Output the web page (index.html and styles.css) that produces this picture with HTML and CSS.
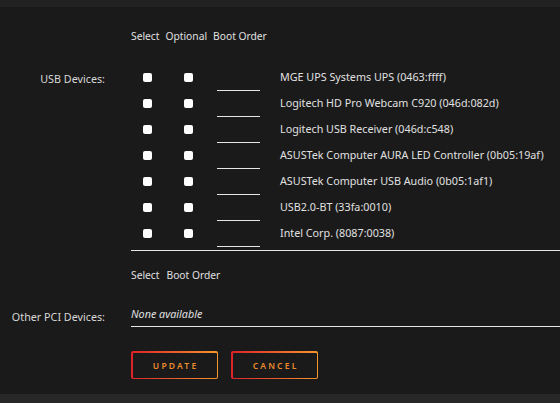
FILE: index.html
```html
<!DOCTYPE html>
<html>
<head>
<meta charset="utf-8">
<link rel="stylesheet" href="styles.css">
</head>
<body>
<div class="topbar"></div>
<main class="panel">
  <form class="form">
    <div class="field">
      <div class="label"></div>
      <div class="head">
        <span>Select</span>
        <span>Optional</span>
        <span>Boot Order</span>
      </div>
    </div>

    <div class="field usb">
      <div class="label first">USB Devices:</div>
      <div class="list">
        <div class="row"><span class="c-sel"><i class="cb"></i></span><span class="c-opt"><i class="cb"></i></span><span class="c-boot"><i class="order"></i></span><span class="name">MGE UPS Systems UPS (0463:ffff)</span></div>
        <div class="row"><span class="c-sel"><i class="cb"></i></span><span class="c-opt"><i class="cb"></i></span><span class="c-boot"><i class="order"></i></span><span class="name">Logitech HD Pro Webcam C920 (046d:082d)</span></div>
        <div class="row"><span class="c-sel"><i class="cb"></i></span><span class="c-opt"><i class="cb"></i></span><span class="c-boot"><i class="order"></i></span><span class="name">Logitech USB Receiver (046d:c548)</span></div>
        <div class="row"><span class="c-sel"><i class="cb"></i></span><span class="c-opt"><i class="cb"></i></span><span class="c-boot"><i class="order"></i></span><span class="name">ASUSTek Computer AURA LED Controller (0b05:19af)</span></div>
        <div class="row"><span class="c-sel"><i class="cb"></i></span><span class="c-opt"><i class="cb"></i></span><span class="c-boot"><i class="order"></i></span><span class="name">ASUSTek Computer USB Audio (0b05:1af1)</span></div>
        <div class="row"><span class="c-sel"><i class="cb"></i></span><span class="c-opt"><i class="cb"></i></span><span class="c-boot"><i class="order"></i></span><span class="name">USB2.0-BT (33fa:0010)</span></div>
        <div class="row"><span class="c-sel"><i class="cb"></i></span><span class="c-opt"><i class="cb"></i></span><span class="c-boot"><i class="order"></i></span><span class="name">Intel Corp. (8087:0038)</span></div>
      </div>
    </div>

    <div class="field">
      <div class="label"></div>
      <div class="head pci-head">
        <span>Select</span>
        <span>Boot Order</span>
      </div>
    </div>

    <div class="field pci">
      <div class="label">Other PCI Devices:</div>
      <div class="none">None available</div>
    </div>

    <div class="field actions">
      <div class="label"></div>
      <div class="buttons">
        <button type="button" class="btn"><span class="btn-face">UPDATE</span></button>
        <button type="button" class="btn"><span class="btn-face">CANCEL</span></button>
      </div>
    </div>
  </form>
</main>
<div class="bottombar"></div>
</body>
</html>
```

FILE: styles.css
```css
html, body {
  margin: 0;
  padding: 0;
  height: 100%;
  overflow: hidden;
}

body {
  background: #1a1a1a;
  color: #e0e0e0;
  font-family: "Noto Sans", "DejaVu Sans", sans-serif;
  font-size: 10.75px;
  display: flex;
  flex-direction: column;
}

.topbar {
  height: 7px;
  background: #222222;
  flex: none;
}

.bottombar {
  height: 9px;
  background: #282828;
  flex: none;
}

.panel {
  flex: 1;
}

.form {
  display: flex;
  flex-direction: column;
}

.field {
  display: grid;
  grid-template-columns: 105px 1fr;
  column-gap: 26px;
  align-items: start;
}

.label {
  text-align: right;
  color: #d8d8d8;
}

.head {
  display: flex;
  gap: 6px;
  font-size: 10.25px;
  margin-top: 22px;
  height: 36px;
  line-height: 14px;
}

.c-sel {
  width: 36px;
  flex: none;
}

.c-opt {
  width: 48px;
  flex: none;
}

.c-boot {
  width: 65px;
  flex: none;
}

.label.first {
  margin-top: 7px;
  line-height: 14px;
}

.list {
  display: flex;
  flex-direction: column;
  border-bottom: 1px solid #e6e6e6;
  padding-bottom: 3px;
}

.row {
  display: flex;
  height: 26px;
  align-items: flex-start;
}

.cb {
  display: block;
  width: 9px;
  height: 9px;
  background: #ffffff;
  border-radius: 2px;
  margin-top: 8px;
}

.c-sel .cb {
  margin-left: 12px;
}

.c-opt .cb {
  margin-left: 17px;
}

.order {
  display: block;
  width: 43px;
  height: 25px;
  margin-left: 2px;
  border-bottom: 1px solid #e6e6e6;
}

.name {
  line-height: 14px;
  margin-top: 5px;
}

.pci-head {
  gap: 7px;
  margin-top: 17px;
  height: 39px;
}

.pci .label {
  margin-top: 3px;
  line-height: 14px;
}

.none {
  font-style: italic;
  line-height: 14px;
  padding-bottom: 5px;
  border-bottom: 1px solid #e6e6e6;
}

.actions {
  margin-top: 24px;
}

.buttons {
  display: flex;
  gap: 13px;
}

/* gradient ring drawn by the outer element, dark face inset by 1.5px */
.btn {
  -webkit-appearance: none;
  appearance: none;
  display: flex;
  width: 87px;
  height: 28px;
  padding: 1.5px;
  border: 0;
  border-radius: 2px;
  background: linear-gradient(to right, #dd2229, #f7962c);
  cursor: pointer;
}

.btn-face {
  flex: 1;
  display: flex;
  align-items: center;
  justify-content: center;
  background: #1a1a1a;
  border-radius: 1px;
  color: #ec8a2e;
  font-family: "Noto Sans", "DejaVu Sans", sans-serif;
  font-size: 8.5px;
  font-weight: 600;
  letter-spacing: 2.2px;
  padding-left: 2.2px;
}
```
